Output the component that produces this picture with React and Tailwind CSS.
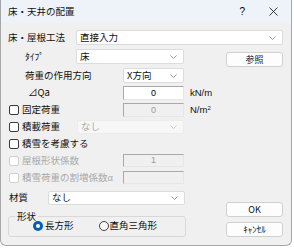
import React from "react";

const font = { fontFamily: '"Noto Sans CJK JP", "Noto Sans", sans-serif' };

function Chevron({ color = "#8a8a8a" }) {
  return (
    <svg width="7" height="4" viewBox="0 0 7 4" className="shrink-0">
      <polyline points="0.5,0.5 3.5,3.5 6.5,0.5" fill="none" stroke={color} strokeWidth="0.9" />
    </svg>
  );
}

function Select({ text, className = "", disabled = false }) {
  return (
    <div
      className={`flex items-center justify-between rounded-[2px] border pl-[3px] pr-[6px] ${
        disabled ? "bg-[#f7f7f7] border-[#ececec] text-[#a6a6a6]" : "bg-white border-[#dcdcdc] text-[#111]"
      } ${className}`}
    >
      <span className="leading-none">{text}</span>
      <Chevron color={disabled ? "#c4c4c4" : "#8a8a8a"} />
    </div>
  );
}

function Field({ value, disabled = false, className = "" }) {
  return (
    <div
      className={`flex items-center justify-center border border-t-[#a9a9a9] border-l-[#a9a9a9] border-b-[#e6e6e6] border-r-[#e6e6e6] text-[9px] leading-none ${
        disabled ? "bg-[#f0f0f0] text-[#9a9a9a]" : "bg-white text-black"
      } ${className}`}
      style={{ fontFamily: '"Liberation Sans", sans-serif' }}
    >
      {value}
    </div>
  );
}

function Check({ label, disabled = false }) {
  return (
    <div className="flex items-center">
      <div
        className={`ml-[1px] h-[10px] w-[10px] rounded-[2px] border bg-white ${
          disabled ? "border-[#cfcfcf]" : "border-[#3a3a3a]"
        }`}
      />
      <span className={`ml-[3px] leading-none ${disabled ? "text-[#a8a8a8]" : "text-[#111]"}`}>{label}</span>
    </div>
  );
}

function Button({ children, className = "" }) {
  return (
    <div
      className={`flex h-[15px] w-[57px] items-center justify-center rounded-[3px] border border-[#d0d0d0] bg-[#fdfdfd] text-[9px] leading-none text-[#111] ${className}`}
    >
      {children}
    </div>
  );
}

export default function App() {
  return (
    <div className="h-[248px] w-[294px] bg-white text-[9.5px] text-[#111]" style={font}>
      <div className="flex h-[246px] w-[292px] flex-col overflow-hidden rounded-b-[6px] border border-t-0 border-[#a7a7a7] bg-[#f0f0f0]">
        {/* title bar */}
        <div className="flex h-[23px] shrink-0 items-center bg-[#eef3fa] pl-[7px]">
          <span className="text-[9.5px] leading-none text-[#111]">床・天井の配置</span>
          <span className="ml-auto mr-[24px] text-[10px] leading-none text-black" style={{ fontFamily: '"Liberation Sans", sans-serif' }}>?</span>
          <svg width="9" height="9" viewBox="0 0 9 9" className="mr-[13px]">
            <path d="M0.5 0.5 L8.5 8.5 M8.5 0.5 L0.5 8.5" stroke="#222" strokeWidth="0.9" />
          </svg>
        </div>

        {/* body */}
        <div className="flex flex-1 flex-col pl-[7px] pr-[8px]">
          <div className="mt-[7px] flex h-[15px] items-center">
            <span className="w-[68px] leading-none">床・屋根工法</span>
            <Select text="直接入力" className="h-[15px] flex-1" />
          </div>

          <div className="mt-[4px] flex">
            {/* left column */}
            <div className="flex w-[218px] flex-col">
              <div className="flex h-[15px] items-center">
                <span className="ml-[17px] w-[51px] leading-none">ﾀｲﾌﾟ</span>
                <Select text="床" className="h-[15px] w-[108px]" />
              </div>
              <div className="mt-[4px] flex h-[15px] items-center">
                <span className="ml-[17px] w-[98px] leading-none">荷重の作用方向</span>
                <Select text="X方向" className="h-[15px] w-[61px]" />
              </div>
              <div className="mt-[3px] flex h-[14px] items-center">
                <span className="ml-[20px] w-[95px] leading-none">⊿Qa</span>
                <Field value="0" className="h-[14px] w-[61px]" />
                <span className="ml-[6px] leading-none" style={{ fontFamily: '"Liberation Sans", sans-serif' }}>kN/m</span>
              </div>
              <div className="mt-[3px] flex h-[14px] items-center">
                <div className="w-[115px]">
                  <Check label="固定荷重" />
                </div>
                <Field value="0" disabled className="h-[14px] w-[61px]" />
                <span className="ml-[6px] leading-none" style={{ fontFamily: '"Liberation Sans", sans-serif' }}>
                  N/m<sup className="text-[6px]">2</sup>
                </span>
              </div>
              <div className="mt-[3px] flex h-[14px] items-center">
                <div className="w-[69px]">
                  <Check label="積載荷重" />
                </div>
                <Select text="なし" disabled className="h-[14px] w-[107px]" />
              </div>
              <div className="mt-[3px] flex h-[14px] items-center">
                <Check label="積雪を考慮する" />
              </div>
              <div className="mt-[3px] flex h-[13px] items-center">
                <div className="w-[115px]">
                  <Check label="屋根形状係数" disabled />
                </div>
                <Field value="1" disabled className="h-[13px] w-[61px]" />
              </div>
              <div className="mt-[4px] flex h-[13px] items-center">
                <div className="w-[115px]">
                  <Check
                    label={
                      <>
                        積雪荷重の割増係数
                        <span style={{ fontFamily: '"Liberation Sans", sans-serif' }}>α</span>
                      </>
                    }
                    disabled
                  />
                </div>
                <Field value="" disabled className="h-[13px] w-[61px]" />
              </div>
              <div className="mt-[7px] flex h-[14px] items-center">
                <span className="ml-[1px] w-[39px] leading-none">材質</span>
                <Select text="なし" className="h-[14px] w-[137px]" />
              </div>
              <fieldset className="mt-[6px] h-[26px] w-[178px] rounded-[3px] border border-[#d8d8d8] px-0 pb-0">
                <legend className="ml-[6px] px-[2px] text-[9.5px] leading-[11px]">形状</legend>
                <div className="-mt-[1px] flex items-center">
                  <div className="ml-[24px] flex h-[10px] w-[10px] items-center justify-center rounded-full bg-[#005fb8]">
                    <div className="h-[4px] w-[4px] rounded-full bg-white" />
                  </div>
                  <span className="ml-[2px] leading-none">長方形</span>
                  <div className="ml-[25px] h-[10px] w-[10px] rounded-full border border-[#444] bg-[#f7f7f7]" />
                  <span className="ml-[1px] leading-none">直角三角形</span>
                </div>
              </fieldset>
            </div>

            {/* right column */}
            <div className="ml-auto flex w-[57px] flex-col">
              <Button className="mt-[3px]">参照</Button>
              <Button className="mt-auto">OK</Button>
              <Button className="mt-[5px]">ｷｬﾝｾﾙ</Button>
            </div>
          </div>
        </div>
      </div>
    </div>
  );
}
